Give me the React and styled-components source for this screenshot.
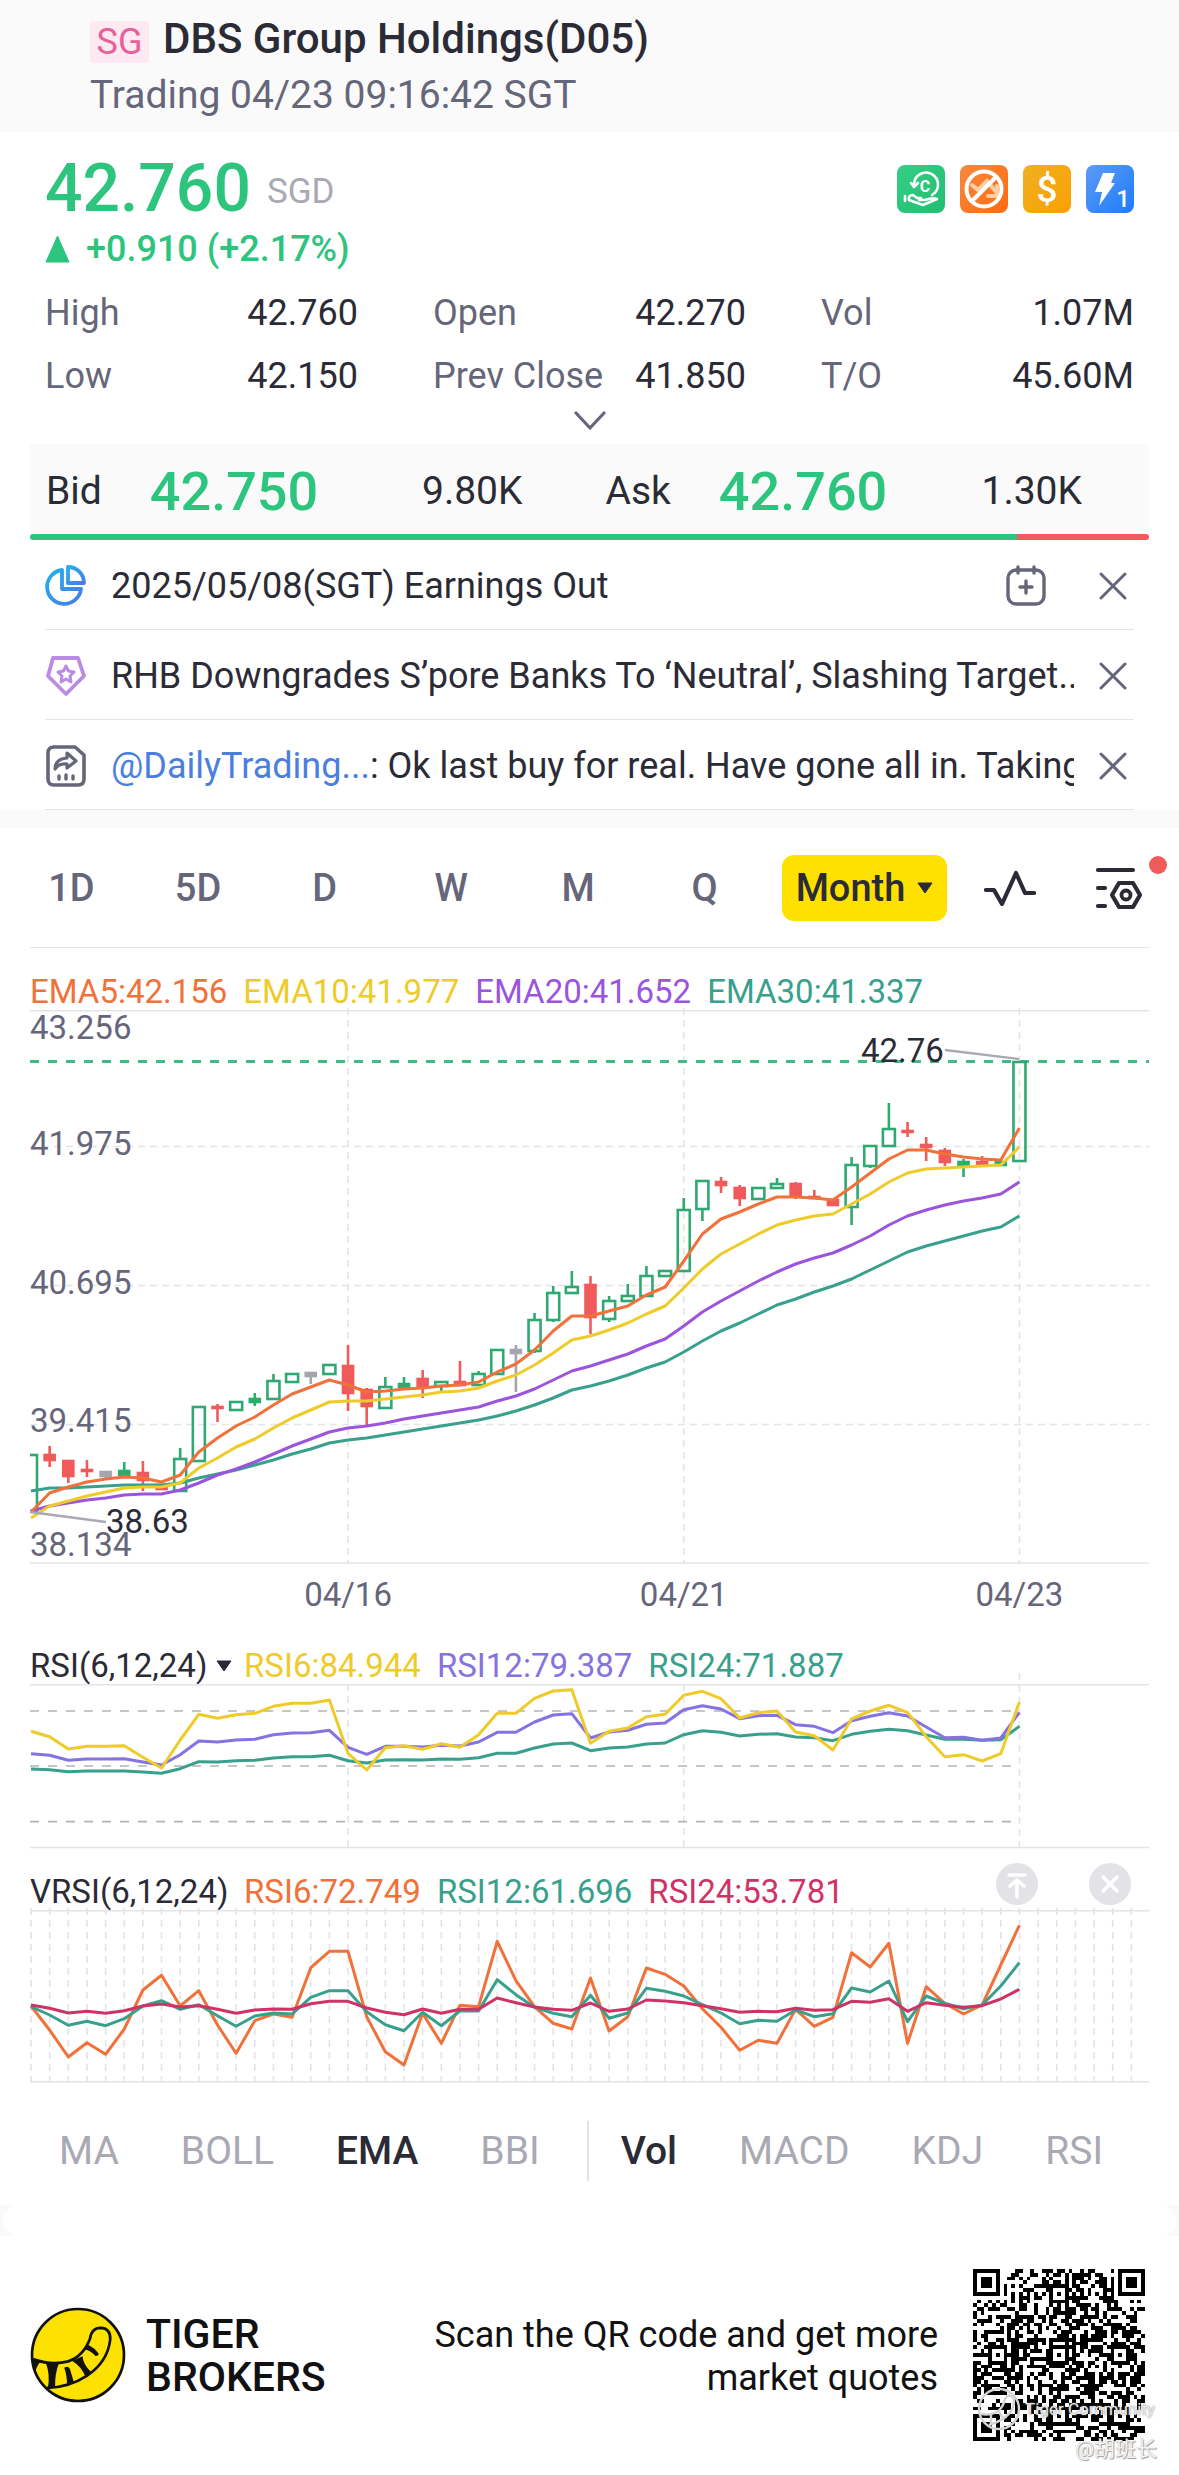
import React from "react";
import styled, { createGlobalStyle } from "styled-components";

const colors = {
  ink: "#2b2b36",
  muted: "#66667a",
  faint: "#a9a9b3",
  line: "#e4e4e8",
  green: "#2dc47e",
  red: "#f05a5a",
  orange: "#f0713a",
  yellow: "#efcb2a",
  purple: "#9a55dc",
  violet: "#8672e0",
  teal: "#38a08c",
  pink: "#cf3366",
};

const stats = [
  { label: "High", value: "42.760" },
  { label: "Open", value: "42.270" },
  { label: "Vol", value: "1.07M" },
  { label: "Low", value: "42.150" },
  { label: "Prev Close", value: "41.850" },
  { label: "T/O", value: "45.60M" },
];

const periods = ["1D", "5D", "D", "W", "M", "Q"];

const emaLegend = [
  { text: "EMA5:42.156", color: colors.orange },
  { text: "EMA10:41.977", color: colors.yellow },
  { text: "EMA20:41.652", color: colors.purple },
  { text: "EMA30:41.337", color: colors.teal },
];

const rsiLegend = [
  { text: "RSI6:84.944", color: colors.yellow },
  { text: "RSI12:79.387", color: colors.violet },
  { text: "RSI24:71.887", color: colors.teal },
];

const vrsiLegend = [
  { text: "RSI6:72.749", color: colors.orange },
  { text: "RSI12:61.696", color: colors.teal },
  { text: "RSI24:53.781", color: colors.pink },
];

const mainIndicators = ["MA", "BOLL", "EMA", "BBI"];
const subIndicators = ["Vol", "MACD", "KDJ", "RSI"];
const activeIndicators = ["EMA", "Vol"];

// kind, high, body top, body bottom, low
// h = hollow rise, g = solid rise, r = fall, n = unchanged
const candles = [
  ["h", 444, 444, 501, 501],
  ["r", 436, 444, 451, 457],
  ["r", 450, 450, 467, 473],
  ["r", 450, 459, 462, 467],
  ["n", 461, 461, 467, 468],
  ["g", 452, 460, 466, 466],
  ["r", 451, 462, 471, 481],
  ["r", 474, 474, 480, 480],
  ["h", 438, 448, 481, 481],
  ["h", 396, 396, 451, 451],
  ["r", 394, 396, 399, 412],
  ["h", 391, 391, 400, 400],
  ["g", 383, 388, 393, 396],
  ["h", 364, 370, 389, 389],
  ["h", 363, 363, 372, 372],
  ["n", 362, 362, 367, 374],
  ["h", 354, 354, 364, 364],
  ["r", 335, 355, 384, 401],
  ["r", 378, 379, 397, 415],
  ["h", 367, 376, 398, 398],
  ["g", 367, 373, 378, 379],
  ["r", 360, 368, 377, 388],
  ["h", 371, 371, 376, 381],
  ["r", 351, 371, 376, 376],
  ["h", 361, 363, 375, 375],
  ["h", 339, 339, 364, 364],
  ["n", 335, 339, 344, 382],
  ["h", 303, 309, 341, 343],
  ["h", 276, 282, 310, 312],
  ["h", 261, 276, 283, 283],
  ["r", 266, 274, 308, 324],
  ["h", 286, 290, 309, 312],
  ["h", 274, 285, 291, 291],
  ["h", 256, 265, 286, 286],
  ["h", 260, 260, 266, 266],
  ["h", 188, 199, 261, 261],
  ["h", 170, 170, 199, 211],
  ["r", 167, 171, 176, 183],
  ["r", 175, 177, 189, 196],
  ["h", 177, 177, 189, 190],
  ["h", 168, 173, 178, 178],
  ["r", 172, 173, 187, 189],
  ["r", 180, 186, 188, 188],
  ["r", 189, 189, 196, 196],
  ["h", 147, 154, 197, 215],
  ["h", 135, 135, 156, 158],
  ["h", 93, 118, 136, 136],
  ["r", 112, 120, 123, 127],
  ["r", 127, 134, 138, 151],
  ["r", 138, 140, 153, 156],
  ["g", 149, 151, 156, 167],
  ["r", 146, 151, 156, 156],
  ["g", 151, 151, 156, 156],
  ["h", 51, 51, 151, 151],
];

const ema5 = [
  502, 483, 477, 472, 469, 467, 468, 472, 465, 442, 428, 416, 407, 395, 384,
  377, 370, 375, 382, 381, 379, 378, 376, 375, 372, 362, 354, 340, 321, 306,
  306, 301, 296, 285, 277, 251, 224, 209, 202, 194, 187, 187, 188, 190, 177,
  163, 149, 140, 140, 144, 147, 149, 150, 118,
];
const ema10 = [
  508, 496, 491, 486, 482, 478, 477, 477, 473, 458, 448, 437, 429, 418, 408,
  400, 392, 391, 391, 389, 387, 385, 382, 381, 378, 371, 365, 355, 343, 330,
  326, 320, 313, 304, 296, 278, 259, 244, 234, 224, 215, 210, 206, 204, 194,
  184, 172, 163, 159, 158, 157, 156, 155, 137,
];
const ema20 = [
  501, 496, 493, 490, 488, 485, 484, 484, 480, 473, 465, 459, 452, 444, 436,
  429, 422, 418, 416, 413, 409, 406, 403, 400, 397, 391, 386, 379, 370, 361,
  356, 350, 344, 336, 329, 316, 302, 291, 281, 271, 262, 254, 248, 243, 235,
  226, 215, 206, 200, 195, 191, 188, 184, 172,
];
const ema30 = [
  481, 478, 478, 477, 476, 475, 475, 475, 473, 468, 464, 460, 455, 450, 444,
  439, 433, 430, 428, 425, 422, 419, 416, 413, 410, 406, 401, 395, 388, 380,
  376, 371, 365, 358, 352, 342, 331, 321, 313, 304, 295, 289, 282, 276, 269,
  260, 251, 242, 236, 231, 226, 221, 217, 206,
];

// the oscillator series are kept in thirds of a unit
const rsi6 = [
  304, 320, 357, 349, 349, 347, 382, 414, 330, 253, 265, 254, 250, 229, 220,
  220, 210, 370, 420, 353, 347, 358, 341, 352, 314, 250, 250, 205, 183, 179,
  340, 304, 294, 260, 253, 196, 184, 206, 264, 248, 243, 306, 317, 360, 267,
  243, 226, 247, 320, 380, 374, 393, 371, 216,
];
const rsi12 = [
  371, 376, 391, 387, 387, 386, 396, 405, 374, 333, 336, 330, 328, 314, 309,
  308, 301, 352, 373, 349, 349, 351, 346, 348, 336, 307, 307, 276, 255, 251,
  324, 306, 301, 283, 279, 239, 227, 237, 266, 257, 256, 284, 289, 308, 272,
  259, 248, 258, 291, 323, 322, 331, 324, 247,
];
const rsi24 = [
  417, 419, 425, 423, 423, 423, 426, 430, 416, 395, 396, 392, 391, 384, 380,
  380, 376, 392, 399, 390, 389, 390, 387, 388, 383, 370, 370, 354, 342, 339,
  362, 354, 351, 342, 339, 314, 302, 307, 318, 313, 311, 321, 323, 332, 313,
  304, 298, 302, 315, 328, 328, 331, 329, 289,
];
const vrsi6 = [
  1128, 1200, 1281, 1238, 1273, 1197, 1080, 1036, 1128, 1082, 1185, 1270, 1172,
  1152, 1162, 1013, 964, 964, 1160, 1265, 1305, 1150, 1240, 1126, 1130, 934,
  1052, 1130, 1180, 1197, 1044, 1203, 1160, 1014, 1033, 1068, 1136, 1192, 1261,
  1231, 1240, 1138, 1189, 1162, 968, 1011, 940, 1240, 1070, 1120, 1152, 1125,
  1005, 886,
];
const vrsi12 = [
  1130, 1155, 1186, 1174, 1187, 1166, 1128, 1112, 1138, 1124, 1157, 1189, 1158,
  1149, 1152, 1102, 1082, 1082, 1145, 1184, 1202, 1147, 1187, 1143, 1143, 1049,
  1094, 1132, 1150, 1160, 1096, 1165, 1149, 1075, 1084, 1098, 1124, 1149, 1181,
  1171, 1174, 1140, 1160, 1151, 1074, 1086, 1053, 1175, 1098, 1120, 1136, 1125,
  1068, 998,
];
const vrsi24 = [
  1125, 1135, 1149, 1144, 1150, 1142, 1128, 1122, 1131, 1127, 1138, 1150, 1140,
  1137, 1138, 1121, 1114, 1114, 1134, 1147, 1154, 1137, 1150, 1138, 1138, 1104,
  1118, 1131, 1138, 1141, 1119, 1144, 1137, 1110, 1113, 1118, 1127, 1136, 1147,
  1144, 1145, 1135, 1141, 1139, 1114, 1117, 1106, 1144, 1118, 1126, 1132, 1127,
  1107, 1078,
];

const xAt = (i) => 1 + i * 18.65;
const toPoints = (values, offset = 0, unit = 1) =>
  values.map((v, i) => `${xAt(i).toFixed(1)},${(v / unit - offset).toFixed(1)}`).join(" ");

const dates = [
  { label: "04/16", i: 17 },
  { label: "04/21", i: 35 },
  { label: "04/23", i: 53 },
];

function Line({ values, color, offset, unit }) {
  return (
    <polyline
      points={toPoints(values, offset, unit)}
      fill="none"
      stroke={color}
      strokeWidth="3"
      strokeLinejoin="round"
    />
  );
}

function Candle({ x, candle }) {
  const [kind, high, top, bottom, low] = candle;
  const color = { h: "#2fa872", g: "#27b06c", r: colors.red, n: "#a5a5b1" }[kind];
  return (
    <g stroke={color} strokeWidth="2.6">
      {high < top && <line x1={x} x2={x} y1={high} y2={top} />}
      {low > bottom && <line x1={x} x2={x} y1={bottom} y2={low} />}
      {kind === "h" ? (
        <rect x={x - 6} y={top + 1} width="12" height={bottom - top - 1} fill="none" />
      ) : (
        <rect x={x - 5} y={top + 1} width="10" height={Math.max(bottom - top - 2, 1)} fill={color} />
      )}
    </g>
  );
}

function PriceChart() {
  return (
    <Chart viewBox="0 0 1119 606" role="img" aria-label="Price chart">
      <g stroke={colors.line} strokeWidth="1.6">
        <line x1="0" x2="1119" y1="0.8" y2="0.8" />
        <line x1="0" x2="1119" y1="553" y2="553" />
        <g strokeDasharray="7 5">
          {[136.5, 275.5, 414.5].map((y) => (
            <line key={y} x1="0" x2="1119" y1={y} y2={y} />
          ))}
          {dates.map(({ i }) => (
            <line key={i} x1={xAt(i)} x2={xAt(i)} y1="-2" y2="553" />
          ))}
        </g>
      </g>
      <g fill={colors.muted}>
        <text x="0" y="29">43.256</text>
        <text x="0" y="145">41.975</text>
        <text x="0" y="284">40.695</text>
        <text x="0" y="422">39.415</text>
        <text x="0" y="546">38.134</text>
        {dates.map(({ label, i }) => (
          <text key={label} x={xAt(i)} y="596" textAnchor="middle">{label}</text>
        ))}
      </g>
      <line x1="0" x2="1119" y1="51.5" y2="51.5" stroke="#3fbb86" strokeWidth="3" strokeDasharray="9 9" />
      <svg x="0" y="0" width="1119" height="606">
        {candles.map((candle, i) => (
          <Candle key={i} x={xAt(i)} candle={candle} />
        ))}
        <Line values={ema30} color={colors.teal} />
        <Line values={ema20} color={colors.purple} />
        <Line values={ema10} color={colors.yellow} />
        <Line values={ema5} color={colors.orange} />
      </svg>
      <g stroke="#a9a9b5" strokeWidth="2.4" fill="none">
        <path d="M0 502L76 512" />
        <path d="M915 40L989 49" />
      </g>
      <g fill={colors.ink}>
        <text x="76" y="523">38.63</text>
        <text x="831" y="52">42.76</text>
      </g>
    </Chart>
  );
}

function RsiChart() {
  return (
    <Chart viewBox="0 0 1119 165" role="img" aria-label="RSI chart">
      <g stroke={colors.line} strokeWidth="1.6">
        <line x1="0" x2="1119" y1="0.8" y2="0.8" />
        <line x1="0" x2="1119" y1="163.5" y2="163.5" />
        {dates.map(({ i }) => (
          <line key={i} x1={xAt(i)} x2={xAt(i)} y1={i === 53 ? -11 : 0} y2="163" strokeDasharray="7 5" />
        ))}
      </g>
      <g stroke="#b4b4b8" strokeWidth="1.6" strokeDasharray="9 9">
        {[27, 82, 137.6].map((y) => (
          <line key={y} x1="0" x2="989" y1={y} y2={y} />
        ))}
      </g>
      <Line values={rsi24} color={colors.teal} offset={54} unit={3} />
      <Line values={rsi12} color={colors.violet} offset={54} unit={3} />
      <Line values={rsi6} color={colors.yellow} offset={54} unit={3} />
    </Chart>
  );
}

function VrsiChart() {
  return (
    <Chart viewBox="0 0 1119 173" role="img" aria-label="VRSI chart">
      <g stroke={colors.line} strokeWidth="1.6">
        <line x1="0" x2="1119" y1="0.8" y2="0.8" />
        <line x1="0" x2="1119" y1="171.7" y2="171.7" />
        {Array.from({ length: 60 }, (_, i) => (
          <line key={i} x1={xAt(i)} x2={xAt(i)} y1="-2" y2="171" strokeDasharray="7 5" />
        ))}
      </g>
      <Line values={vrsi6} color={colors.orange} offset={280} unit={3} />
      <Line values={vrsi12} color={colors.teal} offset={280} unit={3} />
      <Line values={vrsi24} color={colors.pink} offset={280} unit={3} />
    </Chart>
  );
}

// 45 x 45 modules with three finders and the alignment marks
const QR_SIZE = 45;

function inRing(x, y, cx, cy, reach) {
  return Math.max(Math.abs(x - cx), Math.abs(y - cy)) <= reach;
}

function buildQr() {
  let seed = 20250423;
  const cells = [];
  const finders = [[3, 3], [41, 3], [3, 41]];
  const marks = [[22, 6], [6, 22], [22, 22], [38, 22], [22, 38], [38, 38]];
  for (let y = 0; y < QR_SIZE; y++) {
    for (let x = 0; x < QR_SIZE; x++) {
      seed = (seed * 1103515245 + 12345) % 2147483648;
      let on = (seed >> 16) % 100 < 53;
      if (y === 6 || x === 6) on = (x + y) % 2 === 0;
      marks.forEach(([cx, cy]) => {
        const d = Math.max(Math.abs(x - cx), Math.abs(y - cy));
        if (d <= 2) on = d !== 1;
      });
      finders.forEach(([cx, cy]) => {
        const d = Math.max(Math.abs(x - cx), Math.abs(y - cy));
        if (inRing(x, y, cx, cy, 4)) on = d === 3 || d <= 1;
      });
      if (on) cells.push(`M${x} ${y}h1v1h-1z`);
    }
  }
  return cells.join("");
}

const qrPath = buildQr();

function CloseIcon() {
  return (
    <svg width="28" height="28" viewBox="0 0 28 28" fill="none" stroke={colors.muted} strokeWidth="3" strokeLinecap="round">
      <path d="M2 2L26 26M26 2L2 26" />
    </svg>
  );
}

function EarningsIcon() {
  return (
    <svg width="42" height="42" viewBox="0 0 42 42" fill="none" stroke="url(#pie)" strokeWidth="3.8" strokeLinejoin="round">
      <defs>
        <linearGradient id="pie" x1="0" y1="0" x2="1" y2="1">
          <stop offset="0" stopColor="#20b0ea" />
          <stop offset="1" stopColor="#4a7be6" />
        </linearGradient>
      </defs>
      <path d="M17 5A17 17 0 1 0 36 24H17Z" />
      <path d="M23 2V18H39A16 16 0 0 0 23 2Z" />
    </svg>
  );
}

function RatingIcon() {
  return (
    <svg width="42" height="42" viewBox="0 0 42 42" fill="none" stroke="#b98ae6" strokeLinejoin="round">
      <path strokeWidth="3.8" d="M8 3H33L39 21L21 39L3 21Z" />
      <path strokeWidth="3" d="M21 11L23.500 16L29 17L25 21L26 27L21 24L16 27L17 21L13 17L18.500 16Z" />
    </svg>
  );
}

function PostIcon() {
  return (
    <svg width="42" height="42" viewBox="0 0 42 42" fill="none" stroke={colors.muted} strokeLinejoin="round" strokeLinecap="round">
      <path strokeWidth="3.6" d="M8 2H30L39 10V34Q39 40 33 40H9Q3 40 3 34V8Q3 2 9 2" />
      <path strokeWidth="3.2" d="M10 24Q10 14 22 13V8L31 16L22 23V19Q14 18 10 24Z" />
      <path strokeWidth="3.4" d="M14 31V34M21 30V34M28 31V34" />
    </svg>
  );
}

function CalendarIcon() {
  return (
    <svg width="42" height="42" viewBox="0 0 42 42" fill="none" stroke={colors.muted} strokeWidth="3.4" strokeLinecap="round">
      <rect x="3" y="5" width="36" height="34" rx="8" />
      <path d="M13 2V8M29 2V8M21 16V28M15 22H27" />
    </svg>
  );
}

function WaveIcon() {
  return (
    <svg width="52" height="40" viewBox="0 0 52 40" fill="none" stroke={colors.ink} strokeWidth="4.200" strokeLinecap="round" strokeLinejoin="round">
      <path d="M2 22H10L18 36L32 5L41 25H50" />
    </svg>
  );
}

function SettingsIcon() {
  return (
    <svg width="48" height="44" viewBox="0 0 48 44" fill="none" stroke={colors.ink} strokeWidth="4.200" strokeLinecap="round" strokeLinejoin="round">
      <path d="M3 4H38M3 22H10M3 40H10" />
      <path d="M24 17H38L45 29L38 41H24L17 29Z" />
      <circle cx="31" cy="29" r="4.500" strokeWidth="3.800" />
    </svg>
  );
}

function TigerLogo() {
  return (
    <svg width="96" height="96" viewBox="31 51 286 286" aria-hidden="true">
      <circle cx="174" cy="194" r="137" fill="#fde100" stroke="#111" strokeWidth="8" />
      <path d="M42 207Q96 226 145 213Q190 198 210 145Q214 113 242 113Q272 115 270 148Q262 215 200 256Q148 290 82 292" fill="none" stroke="#111" strokeWidth="8" />
      <g fill="#111">
        <path d="M38 203L64 212Q50 226 47 246L38 222Z" />
        <path d="M78 216H118Q104 250 106 293L84 292Q92 254 78 216Z" />
        <path d="M133 232Q144 224 150 236L162 276L141 284Q142 256 133 232Z" />
        <path d="M156 211L188 198Q188 220 212 244L196 258Q184 228 156 211Z" />
        <path d="M193 177L206 164Q222 172 236 190Q234 198 226 197Q214 182 193 177Z" />
      </g>
    </svg>
  );
}

function FeatureIcons() {
  return (
    <Badges>
      <Badge $from="#35cf86" $to="#22bd70">
        <svg width="48" height="48" viewBox="0 0 48 48" fill="none" stroke="#fff" strokeWidth="2.6" strokeLinecap="round" strokeLinejoin="round">
          <path d="M17 19A12 12 0 1 1 35 30M14 18L17 22L21 18" />
          <text x="28" y="27" textAnchor="middle" fontSize="16" fontWeight="700" fill="#fff" stroke="none">C</text>
          <path d="M8 31V36M12 35Q11 30 16 30L20 33H24M12 35L26 40L40 34Q36 32 28 35H22" />
        </svg>
      </Badge>
      <Badge $from="#f58a3c" $to="#ff6a12">
        <svg width="48" height="48" viewBox="0 0 48 48" fill="none" strokeLinecap="round">
          <path d="M12 20L18 25L27 16L37 28M37 21V31H28" stroke="#ffcfa4" strokeWidth="4" />
          <circle cx="24" cy="24" r="17.500" stroke="#fff" strokeWidth="4" />
          <path d="M12 36L36 12" stroke="#fff" strokeWidth="4" />
        </svg>
      </Badge>
      <Badge $from="#f0b021" $to="#faa003">
        <svg width="48" height="48" viewBox="0 0 48 48">
          <text x="24" y="37" textAnchor="middle" fontSize="37" fontWeight="500" fill="#fff">$</text>
        </svg>
      </Badge>
      <Badge $from="#5b9bf5" $to="#1d7cfa">
        <svg width="48" height="48" viewBox="0 0 48 48" fill="#fff">
          <path d="M17 8H29L25 18H29L13 41L16 27H9Z" />
          <text x="37" y="42" textAnchor="middle" fontSize="24" fontWeight="500">1</text>
        </svg>
      </Badge>
    </Badges>
  );
}

function Legend({ items }) {
  return items.map(({ text, color }) => (
    <LegendItem key={text} $color={color}>{text}</LegendItem>
  ));
}

export default function App() {
  return (
    <>
      <GlobalStyle />
      <Header>
        <TitleRow>
          <Market>SG</Market>
          <Title>DBS Group Holdings(D05)</Title>
        </TitleRow>
        <Status>Trading 04/23 09:16:42 SGT</Status>
      </Header>

      <main>
        <Quote>
          <PriceRow>
            <Price>42.760</Price>
            <Currency>SGD</Currency>
            <FeatureIcons />
          </PriceRow>
          <Change>
            <svg width="25" height="28" viewBox="0 0 25 28" fill={colors.green}>
              <path d="M12.500 1L24 27H1Z" stroke={colors.green} strokeLinejoin="round" />
            </svg>
            +0.910 (+2.17%)
          </Change>
          <Stats>
            {stats.map(({ label, value }) => (
              <Stat key={label}>
                <dt>{label}</dt>
                <dd>{value}</dd>
              </Stat>
            ))}
          </Stats>
          <Expand aria-label="Show more">
            <svg width="34" height="20" viewBox="0 0 34 20" fill="none" stroke={colors.muted} strokeWidth="3.200" strokeLinecap="round" strokeLinejoin="round">
              <path d="M3 2L17 17L31 2" />
            </svg>
          </Expand>
        </Quote>

        <Depth>
          <DepthSide>
            <span>Bid</span>
            <DepthPrice>42.750</DepthPrice>
            <DepthSize>9.80K</DepthSize>
          </DepthSide>
          <DepthSide>
            <span>Ask</span>
            <DepthPrice>42.760</DepthPrice>
            <DepthSize>1.30K</DepthSize>
          </DepthSide>
        </Depth>
        <DepthBar />

        <NewsList>
          <NewsRow>
            <EarningsIcon />
            <NewsText href="#earnings">2025/05/08(SGT) Earnings Out</NewsText>
            <IconButton aria-label="Add to calendar"><CalendarIcon /></IconButton>
            <CloseButton aria-label="Close earnings"><CloseIcon /></CloseButton>
          </NewsRow>
          <NewsRow>
            <RatingIcon />
            <NewsText href="#rating">RHB Downgrades S’pore Banks To ‘Neutral’, Slashing Target..</NewsText>
            <CloseButton aria-label="Close rating"><CloseIcon /></CloseButton>
          </NewsRow>
          <NewsRow>
            <PostIcon />
            <NewsText href="#post">
              <Mention>@DailyTrading...</Mention>: Ok last buy for real. Have gone all in. Taking
            </NewsText>
            <CloseButton aria-label="Close post"><CloseIcon /></CloseButton>
          </NewsRow>
        </NewsList>
        <Band />

        <Toolbar>
          <Periods>
            {periods.map((period) => (
              <Period key={period}>{period}</Period>
            ))}
          </Periods>
          <ActivePeriod>
            Month
            <svg width="16" height="12" viewBox="0 0 16 12" fill={colors.ink}>
              <path d="M1 1H15L8 11Z" stroke={colors.ink} strokeLinejoin="round" />
            </svg>
          </ActivePeriod>
          <ToolButtons>
            <IconButton aria-label="Indicators"><WaveIcon /></IconButton>
            <IconButton aria-label="Chart settings">
              <SettingsIcon />
              <Dot />
            </IconButton>
          </ToolButtons>
        </Toolbar>

        <Charts>
          <Rule />
          <ChartHead $space={26}>
            <Legend items={emaLegend} />
          </ChartHead>
          <PriceChart />

          <ChartHead $space={32}>
            <RsiPicker>
              RSI(6,12,24)
              <svg width="16" height="12" viewBox="0 0 16 12" fill={colors.ink}>
                <path d="M1 1H15L8 11Z" stroke={colors.ink} strokeLinejoin="round" />
              </svg>
            </RsiPicker>
            <Legend items={rsiLegend} />
          </ChartHead>
          <RsiChart />

          <ChartHead $space={25}>
            <ChartName>VRSI(6,12,24)</ChartName>
            <Legend items={vrsiLegend} />
            <RoundButtons>
              <RoundButton aria-label="Move to top">
                <svg width="42" height="42" viewBox="0 0 42 42" fill="none" stroke="#fff" strokeWidth="3.600" strokeLinecap="round" strokeLinejoin="round">
                  <path d="M13 12H29M21 34V18M14 23L21 17L28 23" />
                </svg>
              </RoundButton>
              <RoundButton aria-label="Remove chart">
                <svg width="42" height="42" viewBox="0 0 42 42" fill="none" stroke="#fff" strokeWidth="3.600" strokeLinecap="round">
                  <path d="M14 14L28 28M28 14L14 28" />
                </svg>
              </RoundButton>
            </RoundButtons>
          </ChartHead>
          <VrsiChart />
        </Charts>

        <Indicators>
          <IndicatorGroup>
            {mainIndicators.map((name) => (
              <Indicator key={name} $active={activeIndicators.includes(name)}>{name}</Indicator>
            ))}
          </IndicatorGroup>
          <IndicatorGroup $divided>
            {subIndicators.map((name) => (
              <Indicator key={name} $active={activeIndicators.includes(name)}>{name}</Indicator>
            ))}
          </IndicatorGroup>
        </Indicators>
        <Notch />
      </main>

      <Footer>
        <TigerLogo />
        <Brand>TIGER<br />BROKERS</Brand>
        <ScanText>Scan the QR code and get more<br />market quotes</ScanText>
        <QrBox>
          <QrCode viewBox="0 0 45 45" shapeRendering="crispEdges" role="img" aria-label="QR code">
            <path d={qrPath} />
          </QrCode>
          <Watermark>
            <svg width="44" height="44" viewBox="0 0 44 44" fill="none" stroke="#d4d4d4" strokeWidth="2.400">
              <circle cx="22" cy="22" r="20" />
              <path d="M4 27Q24 30 28 12Q32 5 37 12Q38 30 12 38M14 28V37M22 25L27 33" />
            </svg>
            Tiger Community
          </Watermark>
          <Author>@胡班长</Author>
        </QrBox>
      </Footer>
    </>
  );
}

const GlobalStyle = createGlobalStyle`
  * {
    box-sizing: border-box;
  }
  body {
    margin: 0;
    background: #fff;
    color: ${colors.ink};
    font-family: Roboto, "Noto Sans CJK SC", sans-serif;
  }
  button {
    border: 0;
    padding: 0;
    background: none;
    color: inherit;
    font: inherit;
    cursor: pointer;
  }
  svg {
    display: block;
    flex-shrink: 0;
  }
`;

const Header = styled.header`
  padding: 15px 90px 13px;
  background: #fafafa;
`;

const TitleRow = styled.div`
  display: flex;
  align-items: center;
  gap: 14px;
  margin-bottom: 8px;
`;

const Market = styled.span`
  width: 59px;
  margin-top: 6px;
  border-radius: 4px;
  background: #fce9f1;
  color: #e8609a;
  font-size: 36px;
  line-height: 42px;
  text-align: center;
`;

const Title = styled.h1`
  margin: 0;
  font-size: 42px;
  font-weight: 500;
  line-height: 48px;
`;

const Status = styled.div`
  color: ${colors.muted};
  font-size: 39px;
  line-height: 48px;
`;

const Quote = styled.section`
  padding: 21px 45px 0;
`;

const PriceRow = styled.div`
  display: flex;
  align-items: center;
`;

const Price = styled.div`
  color: ${colors.green};
  font-size: 66px;
  font-weight: 500;
  line-height: 72px;
`;

const Currency = styled.span`
  margin-left: 16px;
  padding-top: 4px;
  color: ${colors.faint};
  font-size: 35px;
`;

const Badges = styled.div`
  display: flex;
  gap: 15px;
  margin-left: auto;
`;

const Badge = styled.span`
  border-radius: 8px;
  background: linear-gradient(135deg, ${({ $from }) => $from}, ${({ $to }) => $to});
`;

const Change = styled.div`
  display: flex;
  align-items: center;
  gap: 16px;
  margin-top: 2px;
  color: ${colors.green};
  font-size: 36px;
  font-weight: 500;
  line-height: 44px;
`;

const Stats = styled.dl`
  display: grid;
  grid-template-columns: repeat(3, 1fr);
  gap: 20px 75px;
  margin: 21px 0 0;
  font-size: 36px;
  line-height: 43px;
`;

const Stat = styled.div`
  display: flex;
  justify-content: space-between;

  dt {
    color: ${colors.muted};
  }
  dd {
    margin: 0;
  }
`;

const Expand = styled.button`
  display: flex;
  align-items: center;
  justify-content: center;
  width: 100%;
  height: 46px;
`;

const Depth = styled.section`
  display: grid;
  grid-template-columns: 1fr 1fr;
  height: 90px;
  margin: 0 30px;
  background: #fafafa;
  font-size: 39px;
`;

const DepthSide = styled.div`
  display: flex;
  align-items: center;
  gap: 48px;
  padding: 4px 67px 0 16px;
`;

const DepthPrice = styled.span`
  color: ${colors.green};
  font-size: 54px;
  font-weight: 500;
`;

const DepthSize = styled.span`
  margin-left: auto;
`;

const DepthBar = styled.div`
  height: 6px;
  margin: 0 30px;
  border-radius: 3px;
  background: linear-gradient(to right, ${colors.green} 88.2%, ${colors.red} 88.2%);
`;

const NewsList = styled.section`
  padding: 0 45px;
`;

const NewsRow = styled.div`
  display: flex;
  align-items: center;
  height: 90px;
  padding: 2px 7px 0 0;
  border-bottom: 1px solid ${colors.line};
`;

const NewsText = styled.a`
  flex: 1;
  min-width: 0;
  margin: 0 25px 0 24px;
  overflow: hidden;
  color: ${colors.ink};
  font-size: 36px;
  line-height: 48px;
  text-decoration: none;
  white-space: nowrap;
`;

const Mention = styled.span`
  color: #4a7fe0;
`;

const IconButton = styled.button`
  position: relative;
`;

const CloseButton = styled.button`
  ${IconButton} + & {
    margin-left: 52px;
  }
`;

const Band = styled.div`
  height: 18px;
  background: #fafafa;
`;

const Toolbar = styled.nav`
  display: flex;
  align-items: center;
  height: 119px;
  padding: 0 36px 0 8px;
`;

const Periods = styled.div`
  display: grid;
  flex: 1;
  grid-template-columns: repeat(6, 1fr);
`;

const Period = styled.button`
  color: ${colors.muted};
  font-size: 38px;
  font-weight: 500;
`;

const ActivePeriod = styled.button`
  display: flex;
  align-items: center;
  justify-content: center;
  gap: 12px;
  width: 165px;
  height: 66px;
  margin-left: 14px;
  border-radius: 12px;
  background: #ffe100;
  font-size: 38px;
  font-weight: 500;
`;

const ToolButtons = styled.div`
  display: flex;
  align-items: center;
  gap: 59px;
  margin-left: 37px;
`;

const Dot = styled.i`
  position: absolute;
  top: -10px;
  right: -24px;
  width: 18px;
  height: 18px;
  border-radius: 50%;
  background: ${colors.red};
`;

const Charts = styled.section`
  padding: 0 30px;
`;

const Rule = styled.div`
  height: 1px;
  background: ${colors.line};
`;

const ChartHead = styled.div`
  display: flex;
  gap: 16px;
  padding-top: ${({ $space }) => $space}px;
  font-size: 33px;
  line-height: 36px;
`;

const LegendItem = styled.span`
  color: ${({ $color }) => $color};
`;

const ChartName = styled.span`
  width: 198px;
  white-space: nowrap;
`;

const RsiPicker = styled.button`
  display: flex;
  align-items: center;
  justify-content: space-between;
  width: 202px;
  margin-right: -4px;
  line-height: 36px;
`;

const RoundButtons = styled.div`
  display: flex;
  gap: 51px;
  height: 36px;
  margin: -11px 18px 0 auto;
`;

const RoundButton = styled.button`
  width: 42px;
  height: 42px;
  border-radius: 50%;
  background: #e2e2e7;
`;

const Chart = styled.svg`
  width: 100%;
  height: auto;
  overflow: visible;
  font-size: 33px;
`;

const Indicators = styled.nav`
  display: flex;
  justify-content: space-between;
  padding: 38px 76px 24px 59px;
`;

const IndicatorGroup = styled.div`
  display: flex;
  gap: 62px;
  height: 60px;
  padding-left: ${({ $divided }) => ($divided ? 32 : 0)}px;
  border-left: ${({ $divided }) => ($divided ? `2px solid ${colors.line}` : "0")};
`;

const Indicator = styled.button`
  color: ${({ $active }) => ($active ? colors.ink : colors.faint)};
  font-size: 39px;
  font-weight: ${({ $active }) => ($active ? 500 : 400)};
`;

const Notch = styled.div`
  height: 31px;
  background: #fafafa;

  &::before {
    content: "";
    display: block;
    height: 100%;
    margin: 0 3px;
    border-radius: 16px;
    background: #fff;
  }
`;

const Footer = styled.footer`
  display: flex;
  align-items: center;
  padding: 33px 34px 34px 30px;
  color: #111;
`;

const Brand = styled.div`
  margin-left: 20px;
  padding-top: 2px;
  font-size: 41px;
  font-weight: 500;
  line-height: 43px;
`;

const ScanText = styled.div`
  flex: 1;
  margin-right: 35px;
  padding-top: 3px;
  font-size: 36px;
  line-height: 43px;
  text-align: right;
`;

const QrBox = styled.div`
  position: relative;
`;

const QrCode = styled.svg`
  width: 172px;
  height: 172px;
`;

const Watermark = styled.div`
  position: absolute;
  bottom: 10px;
  right: -10px;
  display: flex;
  align-items: center;
  gap: 4px;
  color: #e6e6e6;
  font-size: 17px;
  text-shadow: 0 0 2px #888;
  white-space: nowrap;
`;

const Author = styled.div`
  position: absolute;
  right: -12px;
  bottom: -20px;
  color: #f4f4f4;
  font-size: 21px;
  line-height: 24px;
  text-shadow: 1px 1px 1px #999, 0 0 1px #aaa;
  white-space: nowrap;
`;
